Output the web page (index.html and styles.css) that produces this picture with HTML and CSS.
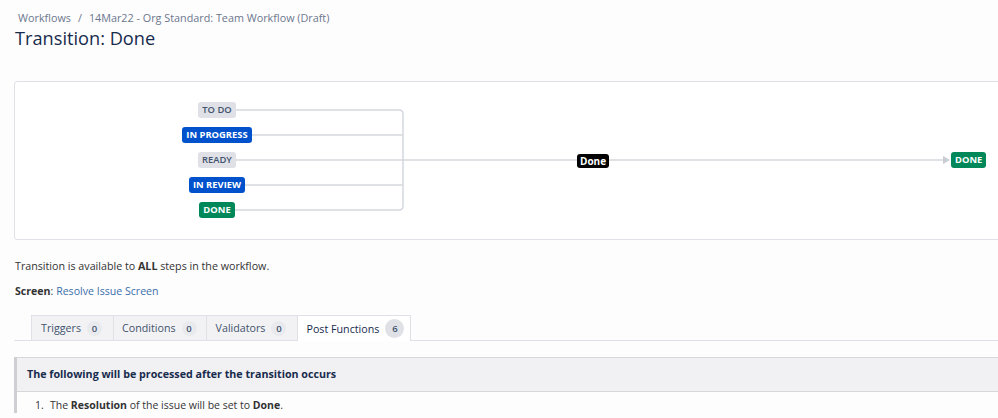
FILE: index.html
```html
<!DOCTYPE html>
<html lang="en">
<head>
<meta charset="utf-8">
<title>Transition: Done</title>
<link rel="stylesheet" href="styles.css">
</head>
<body>
<div class="page">
  <nav class="crumbs"><span>Workflows</span><span class="sep">/</span><span>14Mar22 - Org Standard: Team Workflow (Draft)</span></nav>
  <h1 class="title">Transition: Done</h1>

  <div class="diagram">
    <svg class="wires" width="1000" height="157" viewBox="0 0 1000 157">
      <g fill="none" stroke="#d4d7dd" stroke-width="1.5">
        <path d="M221 28 H384 Q388 28 388 32 V124 Q388 128 384 128 H220"/>
        <path d="M236 53 H388"/>
        <path d="M230 103 H388"/>
        <path d="M221 78 H929"/>
      </g>
      <polygon points="928,74 935,78 928,82" fill="#c9cdd4"/>
    </svg>
    <div class="sources">
      <span class="loz loz-gray">TO DO</span>
      <span class="loz loz-blue">IN PROGRESS</span>
      <span class="loz loz-gray">READY</span>
      <span class="loz loz-blue">IN REVIEW</span>
      <span class="loz loz-green">DONE</span>
    </div>
    <span class="trans-label">Done</span>
    <span class="loz loz-green target">DONE</span>
  </div>

  <p class="avail">Transition is available to <b>ALL</b> steps in the workflow.</p>
  <p class="screen"><b>Screen</b>: <a href="#">Resolve Issue Screen</a></p>

  <div class="tabs">
    <div class="tab">Triggers <span class="badge">0</span></div>
    <div class="tab">Conditions <span class="badge">0</span></div>
    <div class="tab">Validators <span class="badge">0</span></div>
    <div class="tab active">Post Functions <span class="badge badge-dark">6</span></div>
  </div>

  <div class="panel">
    <div class="panel-head">The following will be processed after the transition occurs</div>
    <ol class="panel-list">
      <li>The <b>Resolution</b> of the issue will be set to <b>Done</b>.</li>
    </ol>
  </div>
</div>
</body>
</html>
```

FILE: styles.css
```css
html, body {
  margin: 0;
  padding: 0;
  background: #fefdfe;
  overflow: hidden;
}
body {
  font-family: "Open Sans", "Noto Sans", sans-serif;
  color: #333333;
  width: 998px;
  height: 418px;
}
.page {
  padding-left: 14px;
}
.crumbs {
  padding-top: 10px;
  margin-left: 4px;
  font-size: 10.8px;
  line-height: 15px;
  color: #6b778c;
  display: flex;
}
.crumbs .sep {
  margin: 0 7px;
}
.title {
  margin: 1px 0 0 1px;
  font-size: 18.2px;
  line-height: 25px;
  font-weight: 400;
  color: #172b4d;
}
.diagram {
  position: relative;
  margin-top: 30px;
  height: 157px;
  width: 1000px;
  border: 1px solid #dfe1e6;
  border-radius: 3px;
  background: #ffffff;
}
.wires {
  position: absolute;
  left: 0;
  top: 0;
}
.sources {
  position: absolute;
  left: 145px;
  top: 20px;
  width: 114px;
  display: flex;
  flex-direction: column;
  align-items: center;
  gap: 9px;
}
.loz {
  display: inline-block;
  height: 16px;
  line-height: 16px;
  padding: 0 4px;
  border-radius: 3px;
  font-size: 9.4px;
  font-weight: 700;
  text-transform: uppercase;
  white-space: nowrap;
}
.loz-gray {
  background: #dfe1e6;
  color: #42526e;
  font-weight: 600;
}
.loz-blue {
  background: #0052cc;
  color: #ffffff;
}
.loz-green {
  background: #00875a;
  color: #ffffff;
}
.target {
  position: absolute;
  left: 936px;
  top: 70px;
}
.trans-label {
  position: absolute;
  left: 562px;
  top: 72px;
  height: 14px;
  line-height: 14px;
  padding: 0 3px;
  background: #000000;
  color: #ffffff;
  border-radius: 3px;
  font-size: 10px;
  font-weight: 700;
}
.avail {
  margin: 18px 0 0 1px;
  font-size: 10.7px;
  line-height: 16px;
}
.screen {
  margin: 9px 0 0 1px;
  font-size: 10.6px;
  line-height: 16px;
}
.screen a {
  color: #3b6fab;
  text-decoration: none;
}
.tabs {
  margin-top: 16px;
  padding-left: 17px;
  display: flex;
  border-bottom: 1px solid #dfe1e6;
  width: 1000px;
}
.tab {
  height: 24px;
  line-height: 24px;
  padding: 0 11px 0 9px;
  font-size: 10.7px;
  color: #42526e;
  background: #f2f2f4;
  border: 1px solid #dfe1e6;
  border-bottom: none;
  border-left: none;
  display: flex;
  align-items: center;
  gap: 6px;
}
.tab:first-child {
  border-left: 1px solid #dfe1e6;
}
.tab:nth-child(2) {
  padding: 0 9px 0 8px;
}
.tab.active {
  background: #ffffff;
  color: #172b4d;
  height: 25px;
  margin-bottom: -1px;
  padding: 0 6px 0 8px;
}
.badge {
  display: inline-block;
  min-width: 15px;
  height: 15px;
  line-height: 15px;
  border-radius: 8px;
  background: #e9eaee;
  color: #42526e;
  font-size: 9.5px;
  font-weight: 600;
  text-align: center;
}
.badge-dark {
  min-width: 19px;
  height: 19px;
  line-height: 19px;
  border-radius: 10px;
  background: #dfe1e6;
}
.panel {
  margin-top: 16px;
  border-left: 3px solid #cfcfd3;
  width: 1000px;
}
.panel-head {
  height: 33px;
  line-height: 33px;
  padding-left: 10px;
  background: #f1f0f3;
  border-top: 1px solid #d7d7da;
  border-bottom: 1px solid #d7d7da;
  font-size: 10.7px;
  font-weight: 700;
  color: #172b4d;
}
.panel-list {
  margin: 0;
  padding: 5px 0 0 33px;
  list-style: none;
  counter-reset: step;
  font-size: 10.5px;
  line-height: 16px;
  color: #333333;
}
.panel-list li {
  counter-increment: step;
}
.panel-list li::before {
  content: counter(step) ".";
  display: inline-block;
  width: 15px;
  margin-left: -15px;
}
```
